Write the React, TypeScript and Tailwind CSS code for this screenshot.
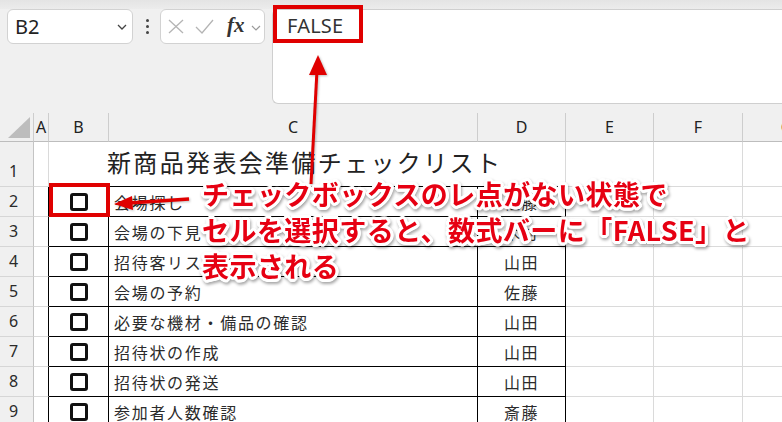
import React from "react";

const cellFont = "font-['Noto_Sans_CJK_JP','Noto_Sans',sans-serif]";
const uiFont = "font-['Noto_Sans','Liberation_Sans',sans-serif]";

const grid = "border-[#dadada]";

type Row = { task: string; owner: string };

const rows: Row[] = [
  { task: "会場探し", owner: "佐藤" },
  { task: "会場の下見", owner: "木村" },
  { task: "招待客リスト作成", owner: "山田" },
  { task: "会場の予約", owner: "佐藤" },
  { task: "必要な機材・備品の確認", owner: "山田" },
  { task: "招待状の作成", owner: "山田" },
  { task: "招待状の発送", owner: "山田" },
  { task: "参加者人数確認", owner: "斎藤" },
];

function CheckBox() {
  return <div className="w-[18px] h-[18px] border-[3px] border-[#111] rounded-[3px] bg-white" />;
}

function RowHeader({ n, tall }: { n: number; tall?: boolean }) {
  return (
    <div
      className={`flex justify-center ${tall ? "items-end" : "items-center"} bg-[#f0f0f0] border-r border-b border-r-[#c4c4c4] border-b-[#d6d6d6] pr-[6px] text-[16px] text-[#2a2a2a] ${uiFont}`}
    >
      <span className="leading-[29px]">{n}</span>
    </div>
  );
}

function ColHeader({ label }: { label: string }) {
  return (
    <div
      className={`flex items-center justify-center bg-[#f0f0f0] border-r border-b border-r-[#cdcdcd] border-b-[#bdbdbd] text-[16px] text-[#222] ${uiFont}`}
    >
      {label}
    </div>
  );
}

function FormulaBar() {
  return (
    <div className="h-[113px] bg-[#f0f0f0]">
      <div className="h-[9px] bg-gradient-to-b from-[#e4e4e4] to-[#ececec]" />
      <div className="flex items-start pl-[7px]">
        {/* name box */}
        <div className="w-[126px] h-[35px] bg-white border border-[#d2d2d2] rounded-[6px] flex items-center justify-between pl-[7px] pr-[5px]">
          <span className={`text-[20px] text-[#222] leading-none ${uiFont}`}>B2</span>
          <svg width="10" height="6" viewBox="0 0 10 6" className="mt-[1px]">
            <polyline points="1,1 5,5 9,1" fill="none" stroke="#444" strokeWidth="1.3" />
          </svg>
        </div>
        {/* overflow dots */}
        <div className="w-[27px] h-[35px] flex flex-col items-center justify-center gap-[3px] pl-[1px]">
          <span className="w-[3px] h-[3px] rounded-full bg-[#444]" />
          <span className="w-[3px] h-[3px] rounded-full bg-[#444]" />
          <span className="w-[3px] h-[3px] rounded-full bg-[#444]" />
        </div>
        {/* cancel / enter / insert function */}
        <div className="w-[105px] h-[35px] bg-white border border-[#d2d2d2] rounded-[6px] flex items-center pl-[7px]">
          <svg width="16" height="15" viewBox="0 0 16 15">
            <line x1="1" y1="1" x2="15" y2="14" stroke="#b4b4b4" strokeWidth="1.3" />
            <line x1="15" y1="1" x2="1" y2="14" stroke="#b4b4b4" strokeWidth="1.3" />
          </svg>
          <svg width="19" height="15" viewBox="0 0 19 15" className="ml-[11px]">
            <polyline points="1,8 7,14 18,1" fill="none" stroke="#b4b4b4" strokeWidth="1.3" />
          </svg>
          <span className="ml-[13px] font-['Liberation_Serif',serif] italic font-bold text-[21px] leading-none text-[#333] -mt-[3px]">
            fx
          </span>
          <svg width="10" height="6" viewBox="0 0 10 6" className="ml-[6px] mt-[2px]">
            <polyline points="1,1 5,5 9,1" fill="none" stroke="#9a9a9a" strokeWidth="1.2" />
          </svg>
        </div>
        {/* formula input */}
        <div className="ml-[7px] flex-1 h-[95px] bg-white border border-r-0 border-[#cfcfcf] rounded-l-[6px] pl-[14px] pt-[4px]">
          <span className={`text-[20px] leading-[24px] text-[#333] tracking-[0.2px] ${uiFont}`}>FALSE</span>
        </div>
      </div>
    </div>
  );
}

function Sheet() {
  const cols = ["A", "B", "C", "D", "E", "F", "G"];
  return (
    <div className="grid grid-cols-[34px_15px_60px_369px_88px_88px_89px_88px] grid-rows-[29px_45px_repeat(8,30px)] bg-white">
      {/* select-all corner */}
      <div className="bg-[#f0f0f0] border-r border-b border-r-[#cdcdcd] border-b-[#bdbdbd] relative">
        <svg width="34" height="29" viewBox="0 0 34 29" className="absolute inset-0">
          <polygon points="8,25 30,25 30,4" fill="#bdbdbd" />
        </svg>
      </div>
      {cols.map((c) => (
        <ColHeader key={c} label={c} />
      ))}

      {/* row 1: title */}
      <RowHeader n={1} tall />
      <div className={`border-r border-b ${grid}`} />
      <div className="border-b border-black" />
      <div className="border-b border-black">
        <div className={`whitespace-nowrap text-[24px] leading-[24px] tracking-[2.35px] text-[#222] pt-[8px] -ml-[2px] ${cellFont}`}>
          新商品発表会準備チェックリスト
        </div>
      </div>
      <div className={`border-b border-b-black border-r ${grid}`} />
      <div className={`border-r border-b ${grid}`} />
      <div className={`border-r border-b ${grid}`} />
      <div className={`border-r border-b ${grid}`} />

      {rows.map((r, i) => (
        <React.Fragment key={i}>
          <RowHeader n={i + 2} />
          <div className={`border-b ${grid} border-r border-r-black`} />
          <div className="border-r border-b border-black flex items-center justify-center pl-[1px]">
            <CheckBox />
          </div>
          <div className="border-r border-b border-black flex items-center pl-[5px]">
            <span className={`whitespace-nowrap text-[16px] leading-none tracking-[1.7px] text-[#2b2b2b] ${cellFont}`}>
              {r.task}
            </span>
          </div>
          <div className="border-r border-b border-black flex items-center justify-center">
            <span className={`text-[16px] leading-none tracking-[1.5px] text-[#2b2b2b] ${cellFont}`}>{r.owner}</span>
          </div>
          <div className={`border-r border-b ${grid}`} />
          <div className={`border-r border-b ${grid}`} />
          <div className={`border-r border-b ${grid}`} />
        </React.Fragment>
      ))}
    </div>
  );
}

function Arrows() {
  return (
    <svg
      width="782"
      height="422"
      viewBox="0 0 782 422"
      className="absolute left-0 top-0 pointer-events-none drop-shadow-[1px_1px_1px_rgba(0,0,0,0.25)]"
    >
      {/* up to the formula bar */}
      <line x1="311" y1="184" x2="317" y2="70" stroke="#e00000" strokeWidth="3" />
      <polygon points="318,55 309,75 327,75" fill="#e00000" />
      {/* left to the checkbox cell */}
      <line x1="189" y1="199" x2="129" y2="203" stroke="#e00000" strokeWidth="3.5" />
      <polygon points="114,204 132,196 133,210" fill="#e00000" />
    </svg>
  );
}

const outline =
  "[text-shadow:3px_0_0_#fff,-3px_0_0_#fff,0_3px_0_#fff,0_-3px_0_#fff,2px_2px_0_#fff,-2px_2px_0_#fff,2px_-2px_0_#fff,-2px_-2px_0_#fff,3px_1px_0_#fff,3px_-1px_0_#fff,-3px_1px_0_#fff,-3px_-1px_0_#fff,1px_3px_0_#fff,-1px_3px_0_#fff,1px_-3px_0_#fff,-1px_-3px_0_#fff]";

function Callout() {
  return (
    <div
      className={`absolute left-[202px] top-[176px] drop-shadow-[1px_2px_1.5px_rgba(0,0,0,0.35)] text-[#e60012] font-bold text-[27px] leading-[36px] tracking-[0.45px] whitespace-nowrap ${cellFont} ${outline}`}
    >
      <div>チェックボックスのレ点がない状態で</div>
      <div>セルを選択すると、数式バーに「FALSE」と</div>
      <div>表示される</div>
    </div>
  );
}

export default function App() {
  return (
    <div className="relative w-[782px] h-[422px] overflow-hidden bg-white">
      <FormulaBar />
      <Sheet />
      {/* highlight on the formula value */}
      <div className="absolute left-[273px] top-[5px] w-[90px] h-[38px] border-[4px] border-[#e00000]" />
      {/* highlight on the selected cell */}
      <div className="absolute left-[49px] top-[183px] w-[61px] h-[34px] border-[4px] border-[#e00000]" />
      <Arrows />
      <Callout />
    </div>
  );
}
